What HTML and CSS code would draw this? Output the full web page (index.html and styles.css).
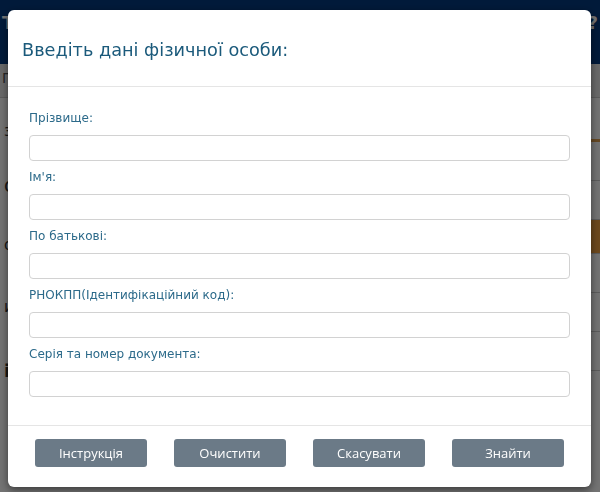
FILE: index.html
```html
<!DOCTYPE html>
<html lang="uk">
<head>
    <meta charset="UTF-8">
    <meta name="viewport" content="width=device-width, initial-scale=1.0">
    <title>Пошук фізичної особи</title>
    <link rel="stylesheet" href="styles.css">
</head>
<body>
    <div class="page">
        <header class="topbar">
            <span class="topbar-logo">Т</span>
            <span class="topbar-user">?</span>
        </header>
        <div class="searchbar"><span>П</span></div>
        <div class="page-grid">
            <ul class="side-list">
                <li>з</li>
                <li class="big">об</li>
                <li>о</li>
                <li>и</li>
                <li class="bold">іт</li>
            </ul>
            <ul class="doc-list">
                <li class="doc-head">Ю</li>
                <li>1.</li>
                <li>2.</li>
                <li class="active">3.</li>
                <li></li>
                <li></li>
                <li></li>
            </ul>
        </div>
    </div>

    <div class="backdrop">
        <div class="modal" role="dialog" aria-labelledby="modal-title">
            <div class="modal-header">
                <h4 id="modal-title">Введіть дані фізичної особи:</h4>
            </div>
            <form class="modal-body">
                <div class="field">
                    <label for="f-surname">Прізвище:</label>
                    <input type="text" id="f-surname">
                </div>
                <div class="field">
                    <label for="f-name">Ім'я:</label>
                    <input type="text" id="f-name">
                </div>
                <div class="field">
                    <label for="f-patronymic">По батькові:</label>
                    <input type="text" id="f-patronymic">
                </div>
                <div class="field">
                    <label for="f-code">РНОКПП(Ідентифікаційний код):</label>
                    <input type="text" id="f-code">
                </div>
                <div class="field">
                    <label for="f-doc">Серія та номер документа:</label>
                    <input type="text" id="f-doc">
                </div>
            </form>
            <div class="modal-footer">
                <button type="button" class="btn">Інструкція</button>
                <button type="button" class="btn">Очистити</button>
                <button type="button" class="btn">Скасувати</button>
                <button type="button" class="btn">Знайти</button>
            </div>
        </div>
    </div>
</body>
</html>
```

FILE: styles.css
```css
*{padding:0; margin:0; box-sizing:border-box; list-style:none;}
html,body{width:600px; height:492px; overflow:hidden;}
body{font-family:"DejaVu Sans", Verdana, sans-serif; background:#fff; color:#222;}

:root{
    --navy:#033a80;
    --title-color:#1b5a7b;
    --label-color:#2c6a8a;
    --input-border:#d2d2d2;
    --btn-bg:#6b7a87;
}

/* page behind the dialog */
.topbar{
    height:64px; background:var(--navy); color:#fff;
    display:flex; justify-content:space-between; align-items:flex-start;
    padding:12px 0 0 2px; font-size:18px; font-weight:bold;
}
.topbar-user{margin-right:2px;}
.searchbar{
    height:34px; background:#e9e9e9; padding:6px 0 0 2px;
    font-size:14px; color:#555; border-bottom:1px solid #ccc;
}
.page-grid{display:grid; grid-template-columns:1fr 1fr;}
.side-list{padding:24px 0 0 4px; font-size:15px; color:#333;}
.side-list li{height:62px;}
.side-list .big{font-size:19px; margin-top:-10px;}
.side-list .bold{font-weight:bold; font-size:18px;}
.doc-list{justify-self:end; width:40px; padding-top:10px; font-size:12px; color:#222;}
.doc-list li{height:39px; border-bottom:1px solid #ccc; padding:16px 0 0 3px;}
.doc-list .doc-head{height:34px; padding-top:2px; font-size:17px; font-weight:bold; border-bottom:3px solid #e0a050;}
.doc-list .active{background:#f0a040; height:34px;}

/* overlay */
.backdrop{
    position:fixed; inset:0;
    background:rgba(0,0,0,0.55);
    padding:10px 9px 5px 8px;
}

.modal{
    background:#fff; border-radius:6px;
    box-shadow:0 3px 9px rgba(0,0,0,0.5);
    display:flex; flex-direction:column; height:477px;
}

.modal-header{
    padding:27px 14px 23px;
    border-bottom:1px solid #e5e5e5;
}
.modal-header h4{
    font-size:17.7px; line-height:26px; font-weight:normal;
    color:var(--title-color);
}

.modal-body{padding:15px 21px 0 21px; flex:1;}
.field label{
    display:block; margin:8px 0; line-height:17px;
    font-size:12px; color:var(--label-color);
}
.field input{
    display:block; width:100%; height:26px;
    border:1px solid var(--input-border); border-radius:4px;
    background:#fff;
}

.modal-footer{
    border-top:1px solid #e5e5e5;
    padding:13px 0 20px;
    display:flex; justify-content:space-evenly;
}
.btn{
    width:112px; height:28px;
    background:var(--btn-bg); color:#fff;
    border:none; border-radius:3px;
    font-family:"Open Sans", sans-serif; font-size:13px;
}
```
